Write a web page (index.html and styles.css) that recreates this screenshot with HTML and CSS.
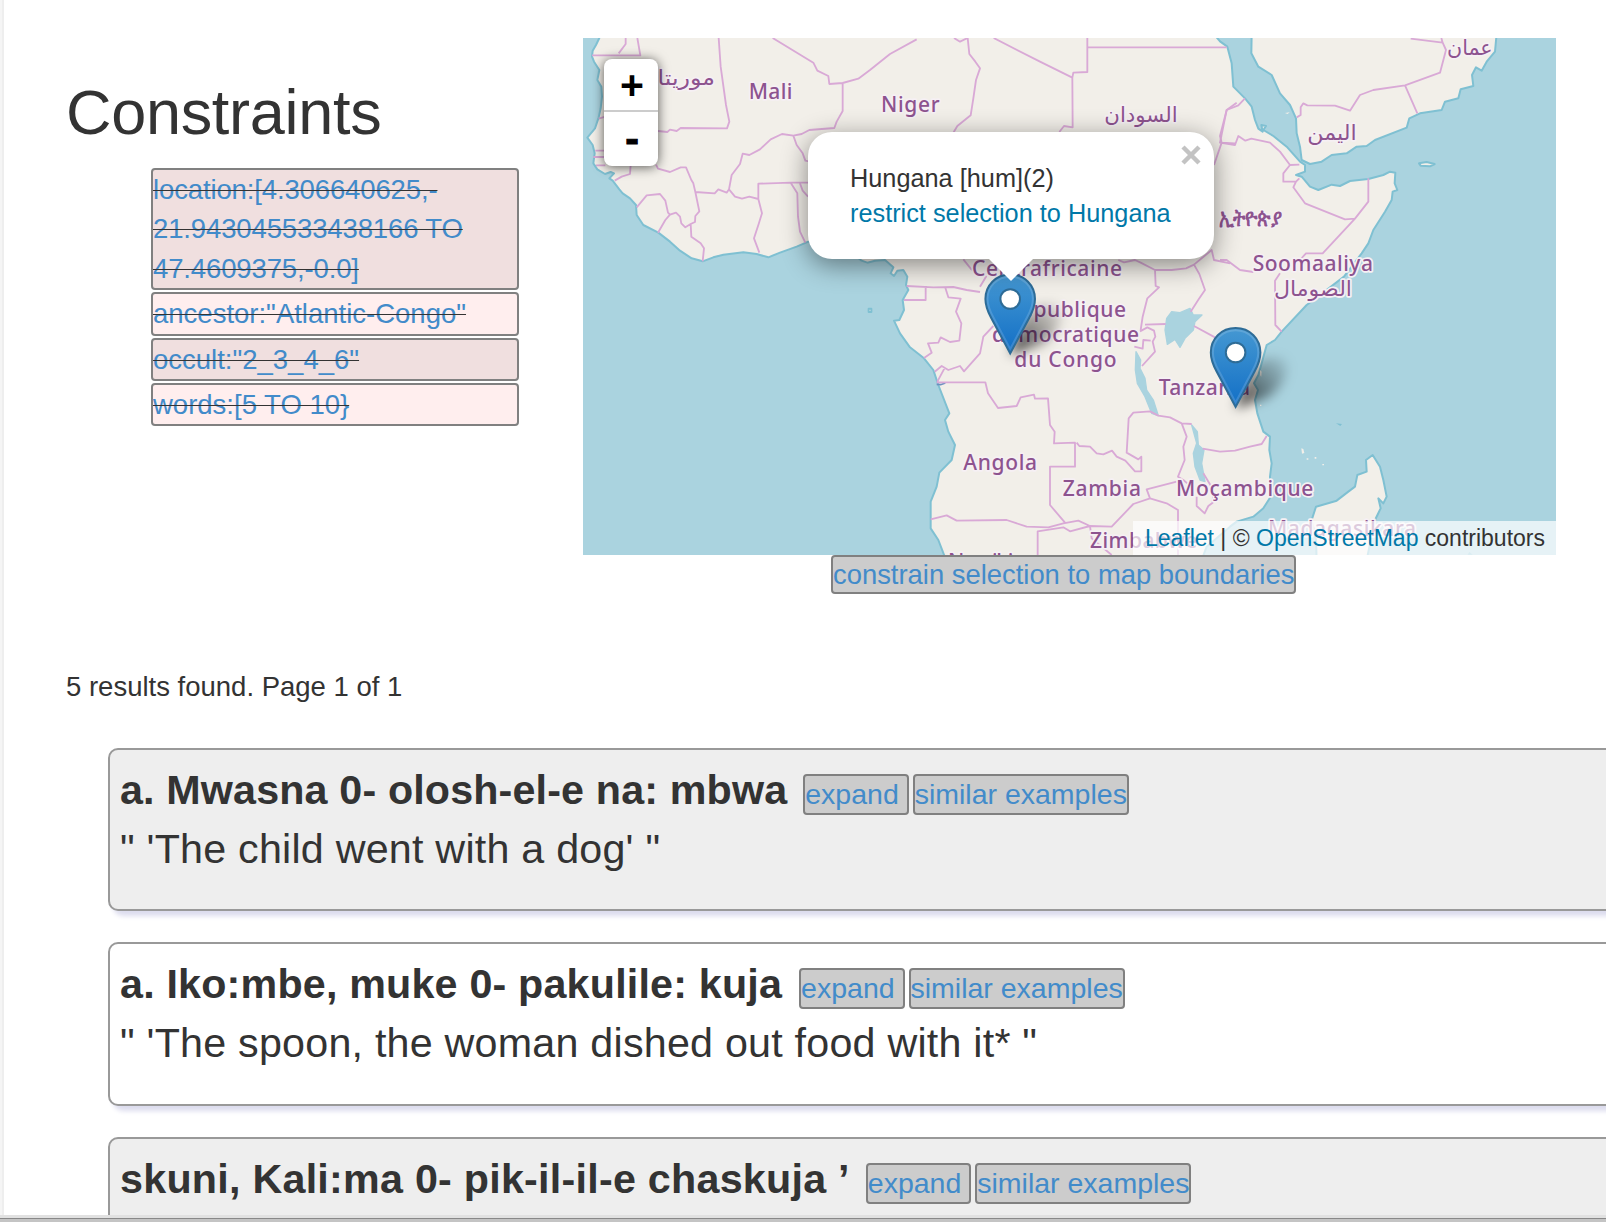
FILE: index.html
```html
<!DOCTYPE html>
<html lang="en">
<head>
<meta charset="utf-8">
<title>Search results</title>
<link rel="stylesheet" href="styles.css">
</head>
<body>
<main class="page">
  <section class="top">
    <div class="filters">
      <h1>Constraints</h1>
      <ul class="constraints">
        <li class="numeric"><a>location:[4.306640625,-<br>21.943045533438166 TO<br>47.4609375,-0.0]</a></li>
        <li><a>ancestor:"Atlantic-Congo"</a></li>
        <li><a>occult:"2_3_4_6"</a></li>
        <li><a>words:[5 TO 10}</a></li>
      </ul>
    </div>
    <div class="map-column">
      <div class="map">
        <svg class="tiles" viewBox="9 24 2919 1551" preserveAspectRatio="none">
          <g class="land">
            <path d="M58 10L58 24 48 45 38 62 36 80 42 95 58 120 52 150 64 170 66 200 62 235 56 262 45 295 22 323 38 345 44 370 40 400 52 418 75 432 92 426 102 430 88 445 98 452 118 478 128 490 150 505 168 525 170 555 190 585 235 608 270 635 300 662 335 685 368 694 400 682 430 674 490 667 530 672 565 682 600 668 650 650 685 635 740 632 800 650 830 680 845 692 862 698 885 692 915 690 940 712 932 730 942 738 952 722 970 720 982 740 978 765 985 780 968 810 972 840 958 870 942 872 960 910 990 952 1032 985 1060 1020 1075 1065 1108 1150 1095 1170 1105 1205 1125 1245 1115 1290 1078 1328 1070 1370 1052 1415 1052 1495 1075 1530 1098 1590 1865 1590 1880 1550 1950 1490 1970 1475 2020 1460 2050 1435 2072 1400 2070 1340 2075 1300 2068 1260 2070 1220 2050 1205 2032 1150 2025 1110 2034 1080 2022 1060 2035 1035 2045 1000 2060 945 2085 930 2105 905 2180 825 2220 795 2292 740 2345 670 2365 640 2380 600 2415 545 2435 510 2438 485 2452 480 2444 460 2446 428 2430 425 2410 435 2365 447 2310 453 2280 468 2255 464 2215 480 2190 470 2165 440 2148 435 2175 425 2175 405 2160 395 2120 350 2080 318 2050 300 2058 288 2044 285 2048 305 2035 296 2025 270 2015 230 1995 205 1960 170 1955 100 1942 50 1920 34 1900 10Z"/>
            <path d="M2015 10L2014 70 2035 110 2075 135 2100 190 2130 225 2148 265 2150 310 2160 350 2165 390 2190 402 2225 395 2255 375 2300 370 2330 350 2360 348 2385 330 2480 293 2488 265 2520 250 2585 240 2595 215 2635 205 2642 178 2680 168 2676 135 2688 112 2705 122 2720 95 2745 65 2750 10Z"/>
            <path d="M2195 1470L2208 1430 2270 1412 2305 1385 2325 1370 2332 1335 2360 1325 2358 1290 2378 1275 2400 1310 2410 1350 2420 1400 2410 1420 2395 1405 2402 1435 2385 1470 2360 1590 2210 1590 2208 1530Z"/>
            <path d="M2517 400L2540 396 2564 402 2550 409 2522 407Z"/>
            <path d="M866 836h8v10h-8z"/>
            <path class="islet" d="M2164 1255l6 2 3 12-7 2zM2180 1285h5v4h-5zM2204 1281h5v5h-5zM2227 1302h5v4h-5zM2115 249l14-2-6 5zM2040 1020l5 5-1 15-4-4zM2040 1124h4v4h-4z"/>
            <path class="mark" d="M2268 1180l18 2-5 6zM2663 1574l5-8 10 8"/>
          </g>
          <g class="lake">
            <path d="M1760 865L1775 845 1800 848 1830 835 1840 855 1866 855 1845 875 1840 900 1815 925 1800 952 1785 928 1762 943 1755 900Z"/>
            <path d="M1668 965L1682 990 1680 1015 1695 1045 1700 1080 1720 1110 1735 1157 1715 1150 1695 1100 1672 1060 1666 1020Z"/>
            <path d="M1835 1185L1852 1205 1855 1245 1872 1260 1865 1300 1875 1355 1860 1350 1845 1310 1840 1270 1850 1240Z"/>
          </g>
          <path class="river" d="M1070 1063L1082 1064 1096 1059"/>
          <g class="borders">
            <path d="M137 24V42L116 70M172 24L181 76H36M416 24L422 110 438 225 448 275 441 295 302 294 290 303 270 299 262 306 234 303M578 24L700 98 712 122 745 138 748 162 788 159 835 146 870 120 930 72 1010 28M788 159V243L770 275 763 294 688 300 665 312 640 317 606 312 572 328 540 358 508 375 488 371 480 402 455 435 447 478 440 488 415 478 404 490 346 486 340 460 334 450 318 412 302 412 270 426 234 416 228 404M640 317L650 345 668 370 676 392 690 395M447 478L465 500 486 506 508 500 535 507V461L632 458 684 458M632 458L652 490 654 560 660 605 676 638M660 460L668 482 684 500M535 507L546 550 536 582 522 625 538 668M346 486L358 544 346 558 345 576 332 582 316 592 304 580 300 560 288 548 270 554 256 570 234 608M332 582L334 620 362 640 372 655 368 694M170 532L200 496 240 492 256 512 264 548 270 554M152 404L150 432 125 440 104 452M46 362H76M40 381H76M48 406H76M56 266L76 260"/>
            <g transform="translate(960 0)"><path d="M162 24L180 35 203 24 208 72 226 95 240 115 228 150 220 205 212 256 172 288 160 308M281 24L420 95 517 143 520 128 562 126V24M562 52H980M517 143L518 292 492 288 478 306M190 688L214 718 240 735 258 740 240 770M655 690L672 697 705 690 722 698 765 720 815 720 858 715 882 704M765 720L767 768 777 772 742 805 728 860 722 900M882 704L898 732 915 780 896 808 872 845M882 704L935 660 942 690 990 700M942 405L965 338 1005 340M965 338L960 318 980 240 1010 218"/></g>
            <g transform="translate(1920 0)"><path d="M75 205L55 226 20 240 0 338 45 345 55 318 76 332 94 326 150 338 180 365 210 405 238 404M210 405L190 430V455H228L238 445M228 455L220 472 255 520 375 568 405 566 445 515V445M405 566L308 670H258L240 690M0 690H20L60 720 100 726M180 730L165 752 166 885 185 905M230 262L242 255V232L250 220 262 226 345 227 390 242 420 195 460 180 555 166 660 128 678 60 668 38 572 26M668 38L664 24M555 166L592 250"/></g>
            <g transform="translate(960 780)"><path d="M12 30H77V-12M20 -12L100 -8 160 -9 200 0 240 6M135 -10L145 22 182 26 168 65 184 100 178 152 150 156 122 142 115 158 84 160 95 188 72 204M280 108L250 140 240 190 192 244 180 228 145 240 125 228 104 245M135 232L112 275M110 277H256L264 310 294 354 350 348 362 322 402 314 405 326 444 325 450 405 464 425 462 460 525 458V530H450V645L495 698M530 458L538 468 570 470 590 490 610 493 636 482 650 500 676 512 705 544H724V500L715 508 680 488 686 385 700 368 750 364 775 377 810 382 845 400 875 402M845 400L860 440 850 470 854 510 834 560 850 570 862 580M830 575L740 598 750 625 700 642 635 710 570 708 535 692 490 700 445 712 380 710 320 690 170 692 140 676 92 688M570 708L510 724 490 712 413 724V795M535 692L570 708 575 745 635 795M750 625L800 640 834 660V795M720 124L742 112 762 122 766 140 758 155 765 185 726 228M735 104L797 102M882 108L945 142M703 170L728 176 730 150 752 152M908 476L960 485 1005 482 1050 470 1085 462 1100 438M910 550L928 580 940 600 938 638 925 648 914 670 890 648V620"/></g>
          </g>
          <g class="names">
            <text x="170" y="165" textLength="235" lengthAdjust="spacingAndGlyphs">موريتانيا</text>
            <text x="506" y="206" textLength="131">Mali</text>
            <text x="903" y="246" textLength="176">Niger</text>
            <text x="1573" y="275" textLength="220" lengthAdjust="spacingAndGlyphs">السودان</text>
            <text x="2601" y="74" textLength="137" lengthAdjust="spacingAndGlyphs">عمان</text>
            <text x="2182" y="329" textLength="148" lengthAdjust="spacingAndGlyphs">اليمن</text>
            <text class="ethiopic" x="1917" y="588" textLength="190" lengthAdjust="spacingAndGlyphs">ኢትዮጵያ</text>
            <text x="2018" y="722" textLength="361">Soomaaliya</text>
            <text x="2082" y="797" textLength="234" lengthAdjust="spacingAndGlyphs">الصومال</text>
            <text x="1176" y="738" textLength="450">Centrafricaine</text>
            <text x="1281" y="862" textLength="357">République</text>
            <text x="1236" y="937" textLength="441">démocratique</text>
            <text x="1303" y="1011" textLength="307">du Congo</text>
            <text x="1150" y="1320" textLength="221">Angola</text>
            <text x="1448" y="1397" textLength="235">Zambia</text>
            <text x="1736" y="1096" textLength="274">Tanzania</text>
            <text x="1788" y="1399" textLength="412">Moçambique</text>
            <text x="1530" y="1555" textLength="322">Zimbabwe</text>
            <text x="1104" y="1616" textLength="228">Namibia</text>
            <text x="2064" y="1517" textLength="444">Madagasikara</text>
          </g>
        </svg>

        <svg class="pins" viewBox="583 38 973 517">
          <defs>
            <linearGradient id="pinFill" x1="0" y1="0" x2="0" y2="1"><stop offset="0" stop-color="#4598d2"/><stop offset="1" stop-color="#126fc6"/></linearGradient>
            <filter id="soft" x="-50%" y="-50%" width="200%" height="200%"><feGaussianBlur stdDeviation="6"/></filter>
            <linearGradient id="shade" x1="0" y1="1" x2="1" y2="0"><stop offset="0" stop-opacity=".8"/><stop offset=".45" stop-opacity=".42"/><stop offset="1" stop-opacity=".04"/></linearGradient>
            <g id="pin">
              <path d="M0 0L12-36Q30-58 50-49Q56-30 34-12Z" fill="url(#shade)" filter="url(#soft)"/>
              <path d="M0-80.500C-14.500-80.500-24.800-69.500-24.800-56C-24.800-48.500-22-42.500-19-37L0-1.500 19-37C22-42.500 24.800-48.500 24.800-56C24.800-69.500 14.500-80.500 0-80.500Z" fill="url(#pinFill)" stroke="#2e6c97" stroke-width="2"/>
              <path d="M0-78.300C-13-78.300-22.700-68.500-22.700-56C-22.700-49-20-43.500-17-38L0-6 17-38C20-43.500 22.700-49 22.700-56C22.700-68.500 13-78.300 0-78.300Z" fill="none" stroke="#fff" stroke-opacity=".15" stroke-width="2"/>
              <circle cy="-56" r="9.800" fill="#fff" stroke="#2e6c97" stroke-width="2"/>
            </g>
          </defs>
          <use href="#pin" x="1010.200" y="355"/>
          <use href="#pin" x="1235.600" y="408.500"/>
        </svg>

        <div class="zoom"><a>+</a><a class="out">-</a></div>

        <div class="popup">
          <p>Hungana [hum](2)<br><a>restrict selection to Hungana</a></p>
          <svg class="close" viewBox="0 0 20 20"><path d="M2 2L18 18M18 2L2 18"/></svg>
          <svg class="tip" viewBox="0 0 46 23"><path d="M0 0H46L23 23Z"/></svg>
        </div>

        <div class="credit"><a>Leaflet</a> | © <a>OpenStreetMap</a> contributors</div>
      </div>
      <a class="btn bounds">constrain selection to map boundaries</a>
    </div>
  </section>

  <p class="count">5 results found. Page 1 of 1</p>

  <section class="results">
    <article class="card">
      <div class="line"><b>a. Mwasna 0- olosh-el-e na: mbwa</b><a class="btn">expand </a><a class="btn">similar examples</a></div>
      <div class="line">" 'The child went with a dog' "</div>
    </article>
    <article class="card plain">
      <div class="line"><b>a. Iko:mbe, muke 0- pakulile: kuja</b><a class="btn">expand </a><a class="btn">similar examples</a></div>
      <div class="line">" 'The spoon, the woman dished out food with it* "</div>
    </article>
    <article class="card">
      <div class="line"><b class="loose">skuni, Kali:ma 0- pik-il-il-e chaskuja ’</b><a class="btn">expand </a><a class="btn">similar examples</a></div>
    </article>
  </section>
</main>
<footer class="edge"></footer>
</body>
</html>
```
FILE: styles.css
```css
* { box-sizing: border-box; }
body {
  margin: 0;
  height: 1222px;
  overflow: hidden;
  display: flex;
  flex-direction: column;
  background: #f5f5f5;
  color: #333;
  font: 27.5px/39.3px "Liberation Sans", Arial, sans-serif;
}
a { color: #428bca; text-decoration: none; }
h1, p, ul { margin: 0; padding: 0; }

.page {
  height: 1215px;
  overflow: hidden;
  margin-left: 2px;
  border-left: 2px solid #eee;
  background: #fff;
}
.edge {
  height: 7px;
  background: #c4c4c4;
  border-top: 3px solid #e1e1e1;
  box-shadow: inset 0 1px #888;
}

.top { display: flex; height: 633px; padding: 38px 0 0 62px; }
.filters { width: 517px; padding-top: 39px; }
h1 { font-size: 63px; font-weight: 400; line-height: 70px; letter-spacing: -.3px; }
.constraints {
  display: flex;
  flex-direction: column;
  gap: 2px;
  width: 368px;
  margin: 21px 0 0 85px;
  list-style: none;
}
.constraints li {
  border: 2px solid #808080;
  border-radius: 4px;
  background: #f0dfdf;
  line-height: 39.4px;
  white-space: nowrap;
  text-decoration: line-through;
  text-decoration-thickness: 1px;
}
.constraints li:nth-child(even) { background: #fee; }
.constraints .numeric { letter-spacing: -.13px; }

.map-column { width: 973px; }
.map {
  position: relative;
  height: 517px;
  overflow: hidden;
  background: #aad3df;
  font-size: 25.3px;
}
.map a { color: #0078a8; }
.tiles, .pins { position: absolute; inset: 0; width: 100%; height: 100%; }
.land path { fill: #f2efe9; stroke: #7fc0d2; stroke-width: 6; stroke-linejoin: round; }
.land .islet { stroke: none; }
.land .mark { fill: #7fc0d2; stroke: none; }
.lake { fill: #aad3df; stroke: #aad3df; stroke-width: 4; stroke-linejoin: round; }
.river { fill: none; stroke: #6b8fc0; stroke-width: 5; }
.borders { fill: none; stroke: #d9a9d6; stroke-width: 5.5; stroke-linejoin: round; }
.names {
  font: 500 63px "Noto Sans", "DejaVu Sans", sans-serif;
  fill: #8d538f;
  stroke: #f6f0f4;
  stroke-width: 10;
  stroke-linejoin: round;
  paint-order: stroke;
}
.names .ethiopic { font-size: 72px; font-weight: 700; }

.zoom {
  position: absolute;
  left: 21px;
  top: 21px;
  width: 54px;
  height: 107px;
  border-radius: 8px;
  background: #fff;
  box-shadow: 0 1px 12px rgba(0, 0, 0, .65);
  font-weight: 700;
  text-align: center;
}
.zoom a { display: block; height: 53px; padding-left: 2px; color: #000; font-size: 41px; line-height: 53px; }
.zoom a:first-child { border-bottom: 2px solid #ccc; }
.zoom .out { -webkit-text-stroke: 1px #000; }

.popup {
  position: absolute;
  left: 225px;
  top: 94px;
  width: 406px;
  height: 127px;
  padding: 29px 0 0 42px;
  border-radius: 24px;
  background: #fff;
  box-shadow: 0 6px 27px rgba(0, 0, 0, .45);
  line-height: 35px;
  white-space: nowrap;
}
.close { position: absolute; right: 13px; top: 13px; width: 20px; height: 20px; }
.close path { stroke: #c3c3c3; stroke-width: 4.5; fill: none; }
.tip { position: absolute; left: 180px; top: 126px; width: 46px; height: 23px; }
.tip path { fill: #fff; }

.credit {
  position: absolute;
  right: 0;
  bottom: 0;
  height: 34px;
  padding: 0 11px 0 12px;
  background: rgba(255, 255, 255, .7);
  font-size: 23px;
  line-height: 35px;
  white-space: nowrap;
}

.btn {
  display: inline-block;
  height: 41px;
  border: 2px solid #808080;
  border-radius: 4px;
  background: #ccc;
  font-size: 28.5px;
  line-height: 36px;
  letter-spacing: 0;
  white-space: pre;
}
.bounds { display: block; width: 465px; height: 39px; margin-left: 248px; font-size: 27.4px; line-height: 35px; }

.count { padding: 34px 0 0 62px; height: 115px; }

.results { display: flex; flex-direction: column; gap: 31px; width: 1700px; padding-left: 104px; }
.card {
  height: 163px;
  padding: 11px 10px 0;
  border: 2px solid #999;
  border-radius: 10px;
  background: #eee;
  box-shadow: 5px 5px 5px #dcdcee;
  font-size: 41.25px;
  letter-spacing: .22px;
}
.card.plain { height: 164px; background: #fff; }
.line { display: flex; align-items: baseline; gap: 4px; height: 59px; line-height: 59px; white-space: nowrap; }
.line b { margin-right: 12px; letter-spacing: .15px; }
.plain .line b { margin-right: 13px; letter-spacing: .19px; }
.line b.loose { letter-spacing: .25px; }
```
